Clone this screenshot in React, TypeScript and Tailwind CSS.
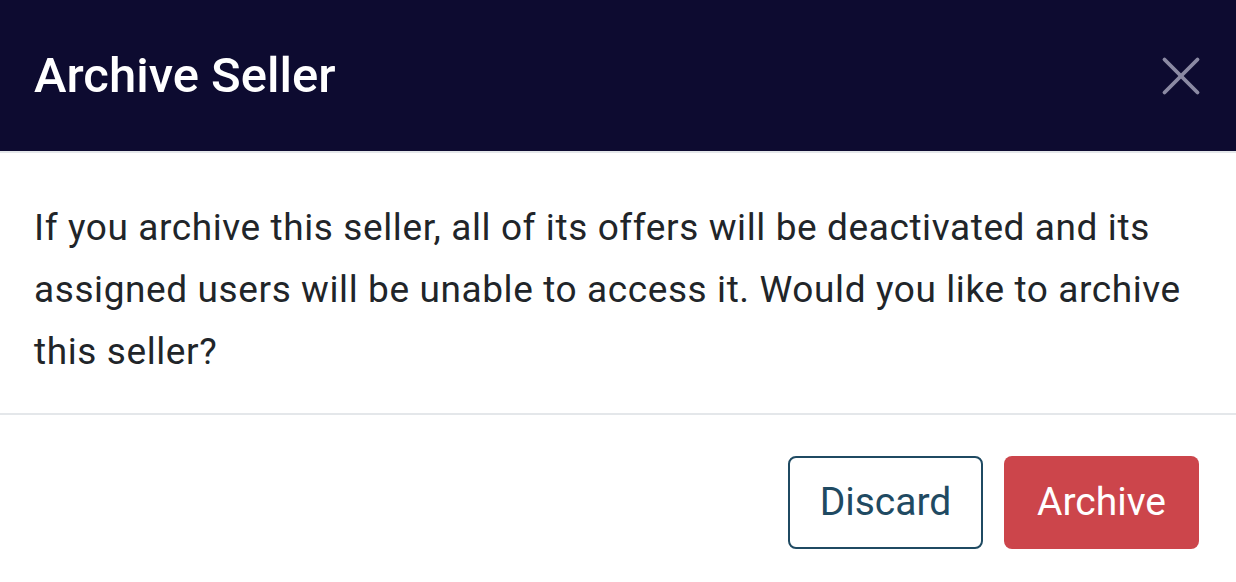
import { X } from "lucide-react";

export default function App() {
  return (
    <div className="w-[1236px] h-[582px] overflow-hidden bg-white font-['Roboto',sans-serif]">
      <div className="h-[151px] bg-[#0d0b30] flex items-center justify-between pl-[34px] pr-[22px]">
        <h2 className="text-white text-[49px] font-medium">Archive Seller</h2>
        <button className="text-[#8b8aa3]">
          <X size={66} strokeWidth={1.4} />
        </button>
      </div>
      <div className="border-t-2 border-[#e4e7ea] px-[34px] pt-[44px] pb-[30px] border-b-2">
        <p className="text-[#212529] text-[37px] leading-[62px] tracking-[0.6px]">
          If you archive this seller, all of its offers will be deactivated and its assigned users will be unable to access it. Would you like to archive this seller?
        </p>
      </div>
      <div className="flex justify-end gap-[21px] px-[37px] pt-[41px]">
        <button className="w-[195px] h-[93px] rounded-[8px] border-2 border-[#1f4a62] text-[#1f4a62] text-[39px]">
          Discard
        </button>
        <button className="w-[195px] h-[93px] rounded-[8px] bg-[#cc454b] text-white text-[39px]">
          Archive
        </button>
      </div>
    </div>
  );
}
